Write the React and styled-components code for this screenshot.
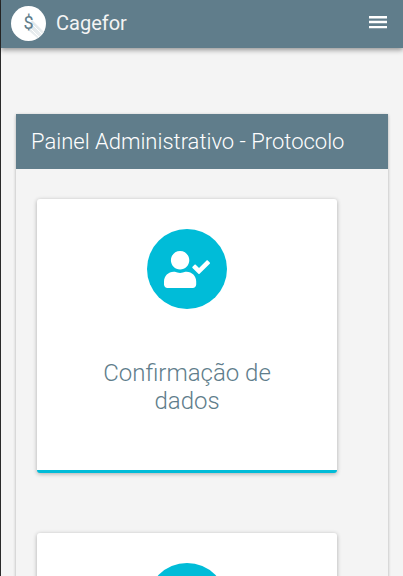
import React from "react";
import styled, { createGlobalStyle } from "styled-components";
import { FaUserCheck } from "react-icons/fa";

const GlobalStyle = createGlobalStyle`
  *, *::before, *::after { box-sizing: border-box; }
  html { scrollbar-width: none; }
  body {
    margin: 0;
    background: #f4f4f4;
    font-family: Roboto, "Liberation Sans", sans-serif;
  }
`;

const Page = styled.div`
  min-height: 100vh;
  border-left: 1px solid #2b2b2b;
`;

const TopBar = styled.header`
  display: flex;
  align-items: center;
  justify-content: space-between;
  height: 48px;
  padding: 0 13px 2px 10px;
  background: #607d8b;
  box-shadow: 0 2px 5px rgba(0, 0, 0, 0.4);
`;

const Brand = styled.a`
  display: flex;
  align-items: center;
  gap: 10px;
  color: #f4f4f4;
  font-size: 20px;
  font-weight: 400;
  line-height: 24px;
  text-decoration: none;
`;

const Logo = styled.svg`
  display: block;
  width: 35px;
  height: 35px;
`;

const MenuButton = styled.button`
  display: flex;
  margin: 0 0 2px;
  padding: 0;
  border: 0;
  background: none;
  color: #fff;
  cursor: pointer;

  svg {
    width: 24px;
    height: 24px;
    fill: currentColor;
  }
`;

const Panel = styled.main`
  margin: 66px 15px 0;
  box-shadow: 0 1px 3px rgba(0, 0, 0, 0.3);
`;

const PanelTitle = styled.h1`
  margin: 0;
  padding: 14px 15px 13px;
  background: #607d8b;
  color: #fff;
  font-size: 22px;
  font-weight: 300;
  line-height: 28px;
`;

const CardList = styled.div`
  display: flex;
  flex-direction: column;
  gap: 60px;
  padding: 30px 21px;
`;

const Card = styled.a`
  display: flex;
  flex-direction: column;
  align-items: center;
  gap: 50px;
  width: 100%;
  max-width: 300px;
  padding: 30px 40px 55px;
  border-bottom: 3px solid #00bcd8;
  border-radius: 3px;
  background: #fff;
  box-shadow: 0 1px 4px rgba(0, 0, 0, 0.3);
  color: #607d8b;
  text-decoration: none;
`;

const IconCircle = styled.span`
  display: flex;
  align-items: center;
  justify-content: center;
  width: 80px;
  height: 80px;
  border-radius: 50%;
  background: #00bcd8;
  color: #fff;

  svg {
    width: 46px;
    height: 37px;
  }
`;

const CardTitle = styled.h2`
  margin: 0;
  font-size: 24px;
  font-weight: 300;
  line-height: 28px;
  text-align: center;
`;

const cards = ["Confirmação de dados", "Consulta de protocolo"];

export default function App() {
  return (
    <>
      <GlobalStyle />
      <Page>
        <TopBar>
          <Brand href="#">
            <Logo viewBox="0 0 35 35" aria-hidden="true">
              <defs>
                <clipPath id="disc"><circle cx="17.5" cy="17.5" r="17.5" /></clipPath>
                <linearGradient id="shade" x1="0" y1="0" x2="1" y2="1">
                  <stop offset="0" stopColor="#dfe5e8" />
                  <stop offset="1" stopColor="#f1f4f5" />
                </linearGradient>
              </defs>
              <circle cx="17.5" cy="17.5" r="17.5" fill="#fff" />
              <g clipPath="url(#disc)">
                <path d="M21 14L38 31L33 38L17 24Z" fill="url(#shade)" />
                <path d="M21 18L37 34M19 22L34 37" stroke="#fff" strokeWidth="1" />
              </g>
              <text x="17.5" y="23" textAnchor="middle" fontSize="18" fontWeight="400" fill="#607d8b">$</text>
            </Logo>
            Cagefor
          </Brand>
          <MenuButton type="button" aria-label="Menu">
            <svg viewBox="0 0 24 24" aria-hidden="true">
              <path d="M3 6h18v2.5H3zM3 10.8h18v2.4H3zM3 16h18v2.2H3z" />
            </svg>
          </MenuButton>
        </TopBar>
        <Panel>
          <PanelTitle>Painel Administrativo - Protocolo</PanelTitle>
          <CardList>
            {cards.map((title) => (
              <Card href="#" key={title}>
                <IconCircle><FaUserCheck aria-hidden="true" /></IconCircle>
                <CardTitle>{title}</CardTitle>
              </Card>
            ))}
          </CardList>
        </Panel>
      </Page>
    </>
  );
}
